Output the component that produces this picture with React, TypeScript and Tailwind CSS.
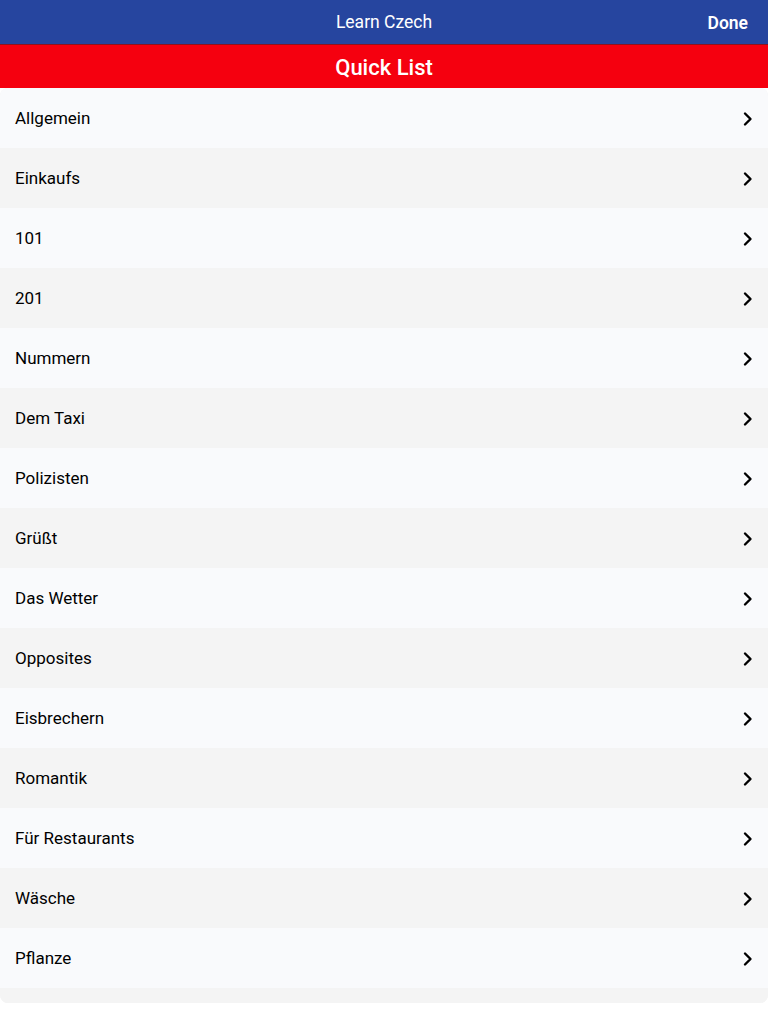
import React from "react";

const items = [
  "Allgemein",
  "Einkaufs",
  "101",
  "201",
  "Nummern",
  "Dem Taxi",
  "Polizisten",
  "Grüßt",
  "Das Wetter",
  "Opposites",
  "Eisbrechern",
  "Romantik",
  "Für Restaurants",
  "Wäsche",
  "Pflanze",
];

function Chevron() {
  return (
    <svg width="12" height="16" viewBox="0 0 12 16" fill="none">
      <path d="M3 2.5 L8.5 8 L3 13.5" stroke="#000" strokeWidth="2.4" strokeLinecap="round" strokeLinejoin="round" />
    </svg>
  );
}

export default function App() {
  return (
    <div className="w-[768px] h-[1024px] bg-white flex flex-col" style={{ fontFamily: "Roboto, 'Noto Sans', sans-serif" }}>
      <div className="h-[44px] bg-[#26459f] relative flex items-center justify-center pt-[1px]">
        <span className="text-white text-[17.5px]">Learn Czech</span>
        <span className="absolute right-[20px] top-[10px] text-white text-[17.5px] font-semibold">Done</span>
      </div>
      <div className="h-[1px] bg-[#8a1420]" />
      <div className="h-[43px] bg-[#f5000f] flex items-center justify-center pt-[2px]">
        <span className="text-white text-[22px] font-medium">Quick List</span>
      </div>
      <div className="rounded-[8px] overflow-hidden bg-[#f4f4f4]">
        {items.map((it, i) => (
          <div
            key={it}
            className={`h-[60px] flex items-center justify-between pl-[15px] pr-[14px] pt-[2px] ${i % 2 === 0 ? "bg-[#f9fafc]" : "bg-[#f4f4f4]"}`}
          >
            <span className="text-black text-[17px]">{it}</span>
            <Chevron />
          </div>
        ))}
        <div className="h-[15px] bg-[#f4f4f4]" />
      </div>
    </div>
  );
}
